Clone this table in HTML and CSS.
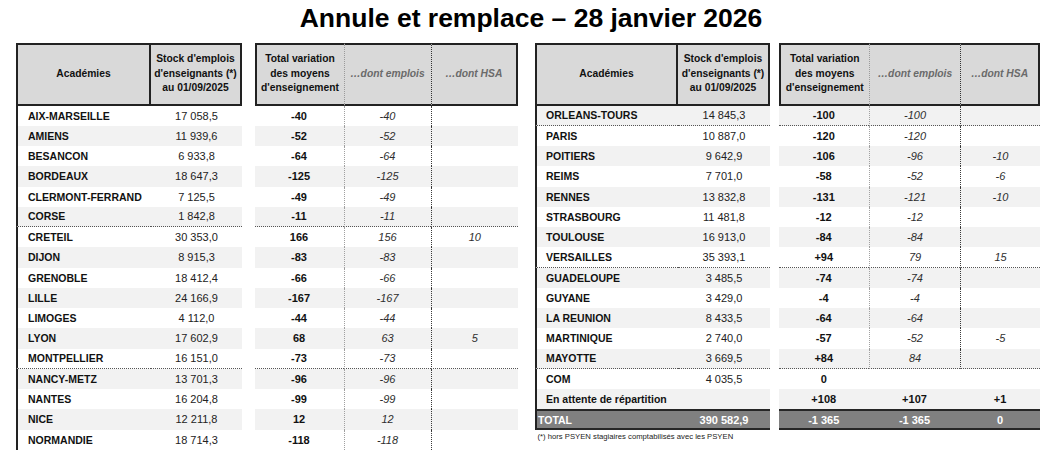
FILE: index.html
```html
<!DOCTYPE html>
<html lang="fr">
<head>
<meta charset="utf-8">
<title>Annule et remplace – 28 janvier 2026</title>
<link rel="stylesheet" href="styles.css">
</head>
<body>
<h1 class="title">Annule et remplace – 28 janvier 2026</h1>
<div class="tables">
  <div class="tbl tbl-left">
    <div class="row head">
      <div class="h-acad">Académies</div>
      <div class="h-stock">Stock d'emplois<br>d'enseignants (*)<br>au 01/09/2025</div>
      <div class="gap"></div>
      <div class="h-tot">Total variation<br>des moyens<br>d'enseignement</div>
      <div class="h-emp">…dont emplois</div>
      <div class="h-hsa">…dont HSA</div>
    </div>
    <div class="row"><div class="name">AIX-MARSEILLE</div><div class="stock">17&nbsp;058,5</div><div class="gap"></div><div class="tot">-40</div><div class="emp">-40</div><div class="hsa"></div></div>
    <div class="row alt"><div class="name">AMIENS</div><div class="stock">11&nbsp;939,6</div><div class="gap"></div><div class="tot">-52</div><div class="emp">-52</div><div class="hsa"></div></div>
    <div class="row"><div class="name">BESANCON</div><div class="stock">6&nbsp;933,8</div><div class="gap"></div><div class="tot">-64</div><div class="emp">-64</div><div class="hsa"></div></div>
    <div class="row alt"><div class="name">BORDEAUX</div><div class="stock">18&nbsp;647,3</div><div class="gap"></div><div class="tot">-125</div><div class="emp">-125</div><div class="hsa"></div></div>
    <div class="row"><div class="name">CLERMONT-FERRAND</div><div class="stock">7&nbsp;125,5</div><div class="gap"></div><div class="tot">-49</div><div class="emp">-49</div><div class="hsa"></div></div>
    <div class="row alt sep"><div class="name">CORSE</div><div class="stock">1&nbsp;842,8</div><div class="gap"></div><div class="tot">-11</div><div class="emp">-11</div><div class="hsa"></div></div>
    <div class="row"><div class="name">CRETEIL</div><div class="stock">30&nbsp;353,0</div><div class="gap"></div><div class="tot">166</div><div class="emp">156</div><div class="hsa">10</div></div>
    <div class="row alt"><div class="name">DIJON</div><div class="stock">8&nbsp;915,3</div><div class="gap"></div><div class="tot">-83</div><div class="emp">-83</div><div class="hsa"></div></div>
    <div class="row"><div class="name">GRENOBLE</div><div class="stock">18&nbsp;412,4</div><div class="gap"></div><div class="tot">-66</div><div class="emp">-66</div><div class="hsa"></div></div>
    <div class="row alt"><div class="name">LILLE</div><div class="stock">24&nbsp;166,9</div><div class="gap"></div><div class="tot">-167</div><div class="emp">-167</div><div class="hsa"></div></div>
    <div class="row"><div class="name">LIMOGES</div><div class="stock">4&nbsp;112,0</div><div class="gap"></div><div class="tot">-44</div><div class="emp">-44</div><div class="hsa"></div></div>
    <div class="row alt"><div class="name">LYON</div><div class="stock">17&nbsp;602,9</div><div class="gap"></div><div class="tot">68</div><div class="emp">63</div><div class="hsa">5</div></div>
    <div class="row sep"><div class="name">MONTPELLIER</div><div class="stock">16&nbsp;151,0</div><div class="gap"></div><div class="tot">-73</div><div class="emp">-73</div><div class="hsa"></div></div>
    <div class="row alt"><div class="name">NANCY-METZ</div><div class="stock">13&nbsp;701,3</div><div class="gap"></div><div class="tot">-96</div><div class="emp">-96</div><div class="hsa"></div></div>
    <div class="row"><div class="name">NANTES</div><div class="stock">16&nbsp;204,8</div><div class="gap"></div><div class="tot">-99</div><div class="emp">-99</div><div class="hsa"></div></div>
    <div class="row alt"><div class="name">NICE</div><div class="stock">12&nbsp;211,8</div><div class="gap"></div><div class="tot">12</div><div class="emp">12</div><div class="hsa"></div></div>
    <div class="row"><div class="name">NORMANDIE</div><div class="stock">18&nbsp;714,3</div><div class="gap"></div><div class="tot">-118</div><div class="emp">-118</div><div class="hsa"></div></div>
  </div>

  <div class="tbl tbl-right">
    <div class="row head">
      <div class="h-acad">Académies</div>
      <div class="h-stock">Stock d'emplois<br>d'enseignants (*)<br>au 01/09/2025</div>
      <div class="gap"></div>
      <div class="h-tot">Total variation<br>des moyens<br>d'enseignement</div>
      <div class="h-emp">…dont emplois</div>
      <div class="h-hsa">…dont HSA</div>
    </div>
    <div class="row alt sep"><div class="name">ORLEANS-TOURS</div><div class="stock">14&nbsp;845,3</div><div class="gap"></div><div class="tot">-100</div><div class="emp">-100</div><div class="hsa"></div></div>
    <div class="row"><div class="name">PARIS</div><div class="stock">10&nbsp;887,0</div><div class="gap"></div><div class="tot">-120</div><div class="emp">-120</div><div class="hsa"></div></div>
    <div class="row alt"><div class="name">POITIERS</div><div class="stock">9&nbsp;642,9</div><div class="gap"></div><div class="tot">-106</div><div class="emp">-96</div><div class="hsa">-10</div></div>
    <div class="row"><div class="name">REIMS</div><div class="stock">7&nbsp;701,0</div><div class="gap"></div><div class="tot">-58</div><div class="emp">-52</div><div class="hsa">-6</div></div>
    <div class="row alt"><div class="name">RENNES</div><div class="stock">13&nbsp;832,8</div><div class="gap"></div><div class="tot">-131</div><div class="emp">-121</div><div class="hsa">-10</div></div>
    <div class="row"><div class="name">STRASBOURG</div><div class="stock">11&nbsp;481,8</div><div class="gap"></div><div class="tot">-12</div><div class="emp">-12</div><div class="hsa"></div></div>
    <div class="row alt"><div class="name">TOULOUSE</div><div class="stock">16&nbsp;913,0</div><div class="gap"></div><div class="tot">-84</div><div class="emp">-84</div><div class="hsa"></div></div>
    <div class="row sep"><div class="name">VERSAILLES</div><div class="stock">35&nbsp;393,1</div><div class="gap"></div><div class="tot">+94</div><div class="emp">79</div><div class="hsa">15</div></div>
    <div class="row alt"><div class="name">GUADELOUPE</div><div class="stock">3&nbsp;485,5</div><div class="gap"></div><div class="tot">-74</div><div class="emp">-74</div><div class="hsa"></div></div>
    <div class="row"><div class="name">GUYANE</div><div class="stock">3&nbsp;429,0</div><div class="gap"></div><div class="tot">-4</div><div class="emp">-4</div><div class="hsa"></div></div>
    <div class="row alt"><div class="name">LA REUNION</div><div class="stock">8&nbsp;433,5</div><div class="gap"></div><div class="tot">-64</div><div class="emp">-64</div><div class="hsa"></div></div>
    <div class="row"><div class="name">MARTINIQUE</div><div class="stock">2&nbsp;740,0</div><div class="gap"></div><div class="tot">-57</div><div class="emp">-52</div><div class="hsa">-5</div></div>
    <div class="row alt sep"><div class="name">MAYOTTE</div><div class="stock">3&nbsp;669,5</div><div class="gap"></div><div class="tot">+84</div><div class="emp">84</div><div class="hsa"></div></div>
    <div class="row nodots"><div class="name">COM</div><div class="stock">4&nbsp;035,5</div><div class="gap"></div><div class="tot">0</div><div class="emp"></div><div class="hsa"></div></div>
    <div class="row alt nodots pending"><div class="name">En attente de répartition</div><div class="stock"></div><div class="gap"></div><div class="tot">+108</div><div class="emp">+107</div><div class="hsa">+1</div></div>
    <div class="row nodots total"><div class="name">TOTAL</div><div class="stock">390&nbsp;582,9</div><div class="gap"></div><div class="tot">-1&nbsp;365</div><div class="emp">-1&nbsp;365</div><div class="hsa">0</div></div>
    <div class="note">(*) hors PSYEN stagiaires comptabilisés avec les PSYEN</div>
  </div>
</div>
</body>
</html>
```

FILE: styles.css
```css
* { box-sizing: border-box; }

body {
  margin: 0;
  font-family: "Liberation Sans", Arial, sans-serif;
  color: #111;
  background: #fff;
}

.title {
  margin: 0;
  height: 42.5px;
  padding-top: 3px;
  text-align: center;
  font-size: 26.5px;
  font-weight: bold;
  line-height: 30px;
  color: #000;
}

.tables {
  display: flex;
  gap: 17px;
  padding-left: 16px;
  align-items: flex-start;
}

.tbl { display: flex; flex-direction: column; }
.tbl-left  { --cols: 135px 91px 12.5px 89px 87px 87.5px; --pad: 10px; }
.tbl-right { --cols: 143px 92px 8.5px 90.5px 91px 80px; --pad: 9px; }

.row {
  display: grid;
  grid-template-columns: var(--cols);
  height: 20.25px;
}

.row > div {
  display: flex;
  align-items: center;
  justify-content: center;
  white-space: nowrap;
}

/* header */
.head { height: 63px; }
.head > div:not(.gap) {
  background: #d9d9d9;
  border-top: 2px solid #222;
  border-bottom: 2px solid #222;
  text-align: center;
  font-size: 10.3px;
  font-weight: bold;
  line-height: 14.8px;
}
.head .h-acad {
  background: #fff;
  border-left: 2px solid #222;
  border-right: 2px solid #222;
  font-size: 9.6px;
}
.head .h-stock { border-right: 2px solid #222; }
.head .h-tot { border-left: 2px solid #222; }
.head .h-emp,
.head .h-hsa {
  font-weight: normal;
  font-style: italic;
  color: #6a6a6a;
  font-size: 10.4px;
}
.head .h-emp { border-left: 1px dotted #9a9a9a; }
.head .h-hsa { border-left: 1px dotted #333; border-right: 2px solid #222; }

/* body cells */
.name {
  justify-content: flex-start !important;
  border-left: 2px solid #222;
  padding-left: var(--pad);
  font-size: 10.5px;
  font-weight: bold;
}
.stock { font-size: 11px; color: #222; }
.tot { font-size: 11px; font-weight: bold; }
.emp, .hsa {
  font-size: 11px;
  font-style: italic;
  color: #2e2e2e;
}
.emp { border-left: 1px dotted #a0a0a0; }
.hsa { border-left: 1px dotted #3a3a3a; }

.alt > div:not(.gap) { background: #f2f2f2; }
.sep > div:not(.gap) { border-bottom: 1px dotted #555; }

.nodots .emp, .nodots .hsa { border-left: none; }

.pending .emp, .pending .hsa {
  font-style: normal;
  font-weight: bold;
  color: #111;
}

.total { height: 21px; }
.total > div:not(.gap) {
  background: #808080;
  color: #fff;
  font-weight: bold;
  font-style: normal;
  border-top: 2px solid #262626;
  border-bottom: 2px solid #262626;
}
.total .name { padding-left: 1px; }

.note {
  margin-top: 2px;
  padding-left: 2.5px;
  font-size: 7.7px;
  line-height: 9px;
  color: #222;
}
```
